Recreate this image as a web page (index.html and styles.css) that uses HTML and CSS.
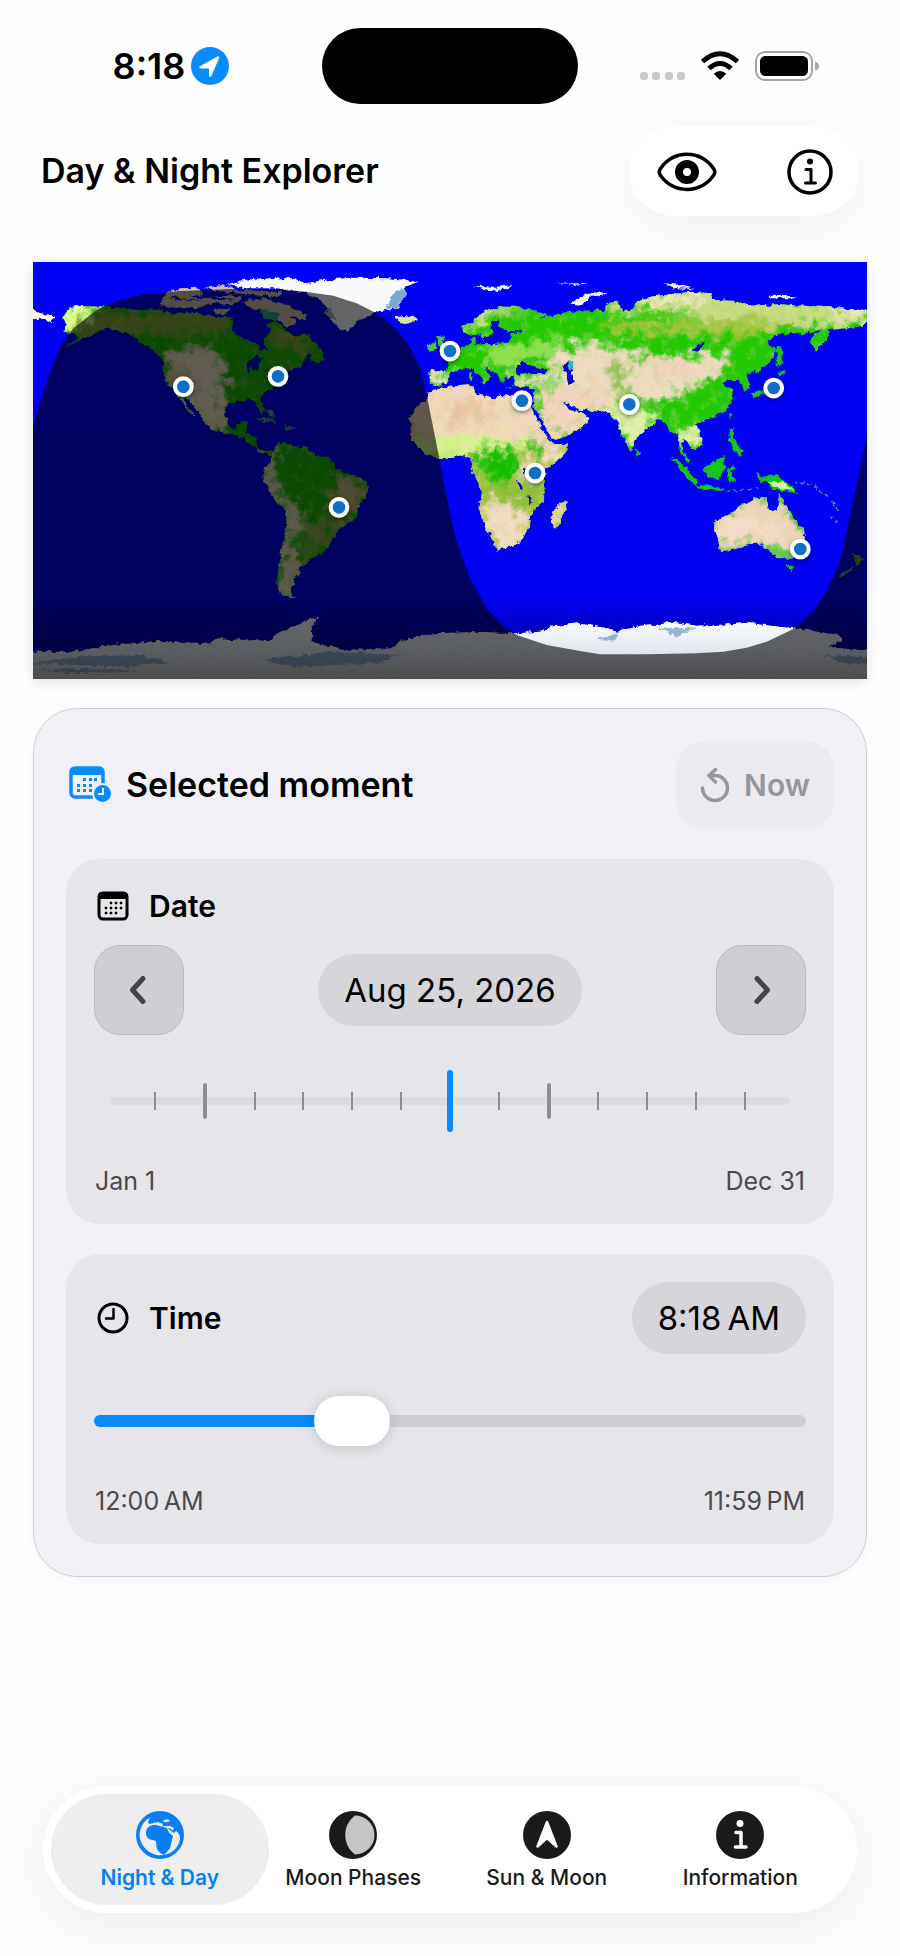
FILE: index.html
```html
<!DOCTYPE html>
<html lang="en">

<head>
  <meta charset="UTF-8">
  <meta name="viewport" content="width=device-width, initial-scale=1.0">
  <title>Day &amp; Night Explorer</title>
  <link rel="stylesheet" href="styles.css">
</head>

<body>
  <div class="status-bar">
    <div class="status-time">
      <span>8:18</span>
      <svg width="38" height="38" viewBox="0 0 38 38" aria-hidden="true">
        <circle cx="19" cy="19" r="19" fill="#0a8aff"/>
        <path d="M27 10.500 19.200 28.500V20.300H9.500Z" fill="#fff" stroke="#fff" stroke-width="2.500" stroke-linejoin="round"/>
      </svg>
    </div>
    <div class="island"></div>
    <div class="status-icons">
      <svg width="45" height="30" viewBox="0 0 45 30" aria-hidden="true" fill="#c9c9c9">
        <rect x="0" y="21" width="8" height="8" rx="3"/>
        <rect x="12" y="21" width="8" height="8" rx="3"/>
        <rect x="25" y="21" width="8" height="8" rx="3"/>
        <rect x="37" y="21" width="8" height="8" rx="3"/>
      </svg>
      <svg width="40" height="30" viewBox="0 0 40 30" aria-hidden="true" fill="none" stroke="#000" stroke-width="5">
        <path d="M2.500 10.500Q20-5 37.500 10.500"/>
        <path d="M9 17.500Q20 7.500 31 17.500"/>
        <path d="M20 29 13.700 22.700Q20 17.500 26.300 22.700Z" fill="#000" stroke="none"/>
      </svg>
      <svg width="64" height="30" viewBox="0 0 64 30" aria-hidden="true">
        <rect x="1" y="1" width="56" height="28" rx="9" fill="none" stroke="#a5a5a5" stroke-width="2"/>
        <rect x="5" y="5" width="48" height="20" rx="5.500"/>
        <path d="M60 10.500Q64 11.500 64 15T60 19.500Z" fill="#a5a5a5"/>
      </svg>
    </div>
  </div>

  <header class="header">
    <h1>Day &amp; Night Explorer</h1>
    <div class="toolbar">
      <button type="button" aria-label="View options">
        <svg width="60" height="40" viewBox="0 0 60 40" fill="none" stroke="#000" stroke-width="3.500">
          <path d="M3.500 16.500C17-2.500 43-2.500 56.500 16.500Q59 20 56.500 23.500C43 42 17 42 3.500 23.500Q1 20 3.500 16.500Z"/>
          <circle cx="30" cy="20" r="8" stroke-width="8"/>
        </svg>
      </button>
      <button type="button" aria-label="About">
        <svg width="46" height="46" viewBox="0 0 46 46" fill="none" stroke="#000" stroke-width="3">
          <circle cx="23" cy="23" r="21" stroke-width="3.500"/>
          <circle cx="23" cy="12.500" r="3" fill="#000" stroke="none"/>
          <path d="M19 20.500h5V34M18.500 34h10" stroke-linecap="round" stroke-linejoin="round"/>
        </svg>
      </button>
    </div>
  </header>

  <main class="content">
    <svg class="map" viewBox="9 21 2502 1251" role="img" aria-label="World map with day and night regions">
      <defs>
        <linearGradient id="ocean" x1="0" y1="0" x2="0" y2="1">
          <stop offset="0" stop-color="#0000f6"/>
          <stop offset="0.800" stop-color="#0000f2"/>
          <stop offset="0.920" stop-color="#0000b0"/>
          <stop offset="1" stop-color="#000080"/>
        </linearGradient>
        <linearGradient id="ice" x1="0" y1="0" x2="0" y2="1">
          <stop offset="0" stop-color="#fff"/>
          <stop offset="0.500" stop-color="#dfe6ee"/>
          <stop offset="1" stop-color="#b0b0b0"/>
        </linearGradient>
        <filter id="rough" x="-5%" y="-5%" width="110%" height="110%">
          <feTurbulence type="fractalNoise" baseFrequency="0.060" numOctaves="3" seed="4"/>
          <feDisplacementMap in="SourceGraphic" scale="18" xChannelSelector="R" yChannelSelector="G"/>
        </filter>
        <filter id="patch" x="-20%" y="-20%" width="140%" height="140%">
          <feGaussianBlur stdDeviation="11" result="b"/>
          <feTurbulence type="fractalNoise" baseFrequency="0.030" numOctaves="4" seed="9" result="n"/>
          <feDisplacementMap in="b" in2="n" scale="90" xChannelSelector="R" yChannelSelector="G"/>
        </filter>
        <filter id="grain" x="0" y="0" width="100%" height="100%">
          <feTurbulence type="fractalNoise" baseFrequency="0.035" numOctaves="5" seed="21"/>
          <feColorMatrix values="0 0 0 0 0.450  0 0 0 0 0.650  0 0 0 0 0.200  4 0 0 0 -2.100"/>
        </filter>
        <filter id="pin-shadow" x="-50%" y="-50%" width="200%" height="200%">
          <feDropShadow dx="0" dy="5" stdDeviation="7" flood-opacity="0.500"/>
        </filter>

        <path id="america" d="M100 185 120 155 150 152 205 155 260 160 330 165 385 163 430 175 480 170 520 178 560 185 600 185 612 200 602 228 640 250 680 262 692 288 706 280 700 250 722 235 712 208 740 200 770 228 800 245 825 235 865 270 885 315 860 322 835 318 850 298 830 300 815 335 770 348 745 382 722 405 700 415 690 430 705 465 698 480 684 460 678 438 650 434 620 440 590 450 583 480 592 512 615 522 630 500 655 498 645 535 680 545 680 575 700 590 726 590 718 602 690 592 665 570 640 550 610 540 580 535 545 520 520 495 480 440 460 422 475 458 497 487 482 476 455 438 430 405 410 385 400 355 400 320 370 285 340 270 310 240 270 228 230 218 190 237 150 257 100 276 145 250 130 235 98 230 112 205Z
          M725 592 745 568 765 562 790 575 830 577 860 600 895 607 920 642 960 658 1000 673 1017 695 1000 735 985 755 980 790 950 808 925 825 905 860 880 890 850 908 822 930 800 938 810 960 795 968 790 990 778 1008 798 1030 760 1025 738 995 745 940 755 880 768 820 770 770 735 735 715 700 697 675 705 640 722 620Z"/>
        <path id="arctic" d="M390 150 405 112 450 100 500 98 520 118 480 125 520 130 600 120 640 130 600 150 540 145 500 160 440 160Z
          M640 138 700 130 760 145 830 180 825 195 780 185 800 205 770 218 740 190 690 165 650 155Z
          M525 98 580 90 620 105 700 108 760 112 740 125 650 118 560 110Z M550 165 600 158 590 178 560 178Z"/>
        <path id="greenland" d="M590 90 640 78 720 70 790 70 830 85 880 75 960 68 1080 70 1165 80 1120 98 1130 122 1100 158 1050 168 1020 182 975 200 958 228 930 224 905 200 890 160 870 132 820 112 740 100 650 100Z"/>
        <path id="eurasia" d="M388 345 440 347 446 322 430 305 470 290 500 272 515 262 512 250 525 248 532 268 570 268 620 264 636 245 625 232 600 240 580 250 550 258 538 235 510 240 490 235 485 215 520 200 545 172 600 155 650 155 700 165 740 180 715 190 760 180 800 172 870 166 915 165 920 145 950 140 970 170 990 165 1010 145 1050 125 1170 110 1235 115 1240 135 1310 138 1350 152 1440 148 1560 155 1702 165 1702 200 1690 212 1640 220 1590 225 1580 255 1545 290 1532 265 1540 240 1570 220 1530 235 1440 235 1400 262 1425 280 1420 310 1380 345 1340 360 1350 400 1330 405 1320 375 1280 375 1270 390 1295 400 1300 430 1275 470 1230 490 1210 500 1185 507 1208 545 1205 570 1185 587 1160 560 1145 555 1150 590 1170 615 1165 625 1140 590 1135 540 1110 530 1095 500 1075 495 1050 515 1010 545 1000 580 990 588 965 540 955 500 915 470 840 465 810 450 788 438 805 465 840 470 865 490 858 508 800 545 755 557 740 520 700 455 700 400 640 392 640 366 618 365 612 388 598 378 590 355 552 335 575 365 556 388 540 365 520 342 480 345 450 355 445 375 420 395 390 385Z"/>
        <path id="africa" d="M385 410 400 405 450 395 520 390 525 415 590 435 600 420 690 428 694 455 730 530 755 567 805 568 800 590 735 650 732 740 695 770 690 815 660 865 590 887 575 850 550 800 535 760 545 700 515 650 515 615 490 600 420 612 380 600 335 555 330 490 350 455 385 430Z M795 735 800 760 775 820 758 820 755 790 765 760Z"/>
        <path id="australia" d="M400 800 460 770 480 750 510 745 525 728 560 730 565 760 590 768 598 715 610 740 635 780 670 820 678 850 655 900 625 912 590 905 560 880 545 865 500 868 460 885 420 888 415 860Z"/>
        <clipPath id="clip-america"><use href="#america"/></clipPath>
        <clipPath id="clip-eurasia"><use href="#eurasia"/></clipPath>
        <clipPath id="clip-africa"><use href="#africa"/></clipPath>
        <clipPath id="clip-australia"><use href="#australia"/></clipPath>
      </defs>

      <rect x="9" y="21" width="2502" height="1251" fill="url(#ocean)"/>

      <!-- Americas -->
      <g filter="url(#rough)">
        <use href="#america" fill="#1cb400"/>
        <g clip-path="url(#clip-america)">
          <g filter="url(#patch)">
            <path fill="#86a840" d="M130 170H600V230L400 240 150 250Z M720 215 870 260 800 290 730 270Z"/>
            <path fill="#dcff90" d="M90 145H210L150 205 90 240Z"/>
            <path fill="#f4e6cc" d="M400 290 480 270 560 280 590 340 580 430 590 530 540 520 460 470 410 400Z"/>
            <path fill="#dcc4a4" d="M410 340 470 320 500 400 450 430Z"/>
            <path fill="#ecdfc0" d="M690 600 740 575 735 660 760 730 830 770 790 860 820 900 800 1040 730 1030 760 850 760 770 700 720Z"/>
            <path fill="#c8b880" d="M920 660 1010 680 980 780 930 820 890 770Z"/>
            <path fill="#8cb04c" d="M820 800 920 800 880 890 830 900Z"/>
          </g>
          <rect x="80" y="140" width="950" height="900" filter="url(#grain)" opacity="0.300"/>
        </g>
        <path fill="#0000f0" d="M655 315 680 300 700 312 690 322 680 352 665 330 655 355 650 330Z M700 345 740 338 730 350Z"/>
        <use href="#arctic" fill="#d0c4a8"/>
        <path fill="#fff8dc" d="M9 163 30 175 78 186 60 202 35 188 9 190Z"/>
        <path fill="#3f9e90" d="M690 160 750 178 735 200 700 190Z M675 490 720 490 745 504 700 500Z M760 512 800 518 770 524Z M705 460 728 470 735 492 715 480Z"/>
        <path fill="#0000f0" d="M420 125 520 138 440 135Z M600 165 650 170 620 180Z M530 125 620 132 560 136Z"/>
        <use href="#greenland" fill="#f8fafc"/>
        <path fill="#4c86b8" d="M1090 115 1120 100 1130 125 1095 160 1065 160Z" opacity="0.700"/>
        <path fill="#9fb49a" d="M882 170 905 160 918 200Z"/>
      </g>

      <!-- Europe, Africa and Asia -->
      <g transform="translate(810 0)" filter="url(#rough)">
        <use href="#eurasia" fill="#22c800"/>
        <g clip-path="url(#clip-eurasia)">
          <g filter="url(#patch)">
            <path fill="#c8dc82" d="M480 150H720L600 175 540 200 490 240Z M900 130 1240 100 1710 150V215L1300 210 1180 180 1000 165 920 180Z"/>
            <path fill="#f0e8c0" d="M1000 110 1240 100 1180 150 1040 145Z M1560 155 1710 160V210Z"/>
            <path fill="#a2c63c" d="M900 200 1120 195 1380 190 1500 220 1400 240 1100 240 920 230Z"/>
            <path fill="#eedcc0" d="M760 290 860 262 960 270 1050 310 1150 300 1290 300 1270 350 1160 410 1060 440 960 430 940 480 820 480 760 380Z"/>
            <path fill="#f3d4bc" d="M820 400 910 390 930 470 840 470Z M700 400 830 400 880 500 760 560 720 520Z M1000 310 1160 310 1230 330 1140 370 1040 360Z"/>
            <path fill="#dff0a8" d="M920 440 1060 470 1060 520 1000 590 950 520Z M1130 510 1200 520 1200 580 1150 570Z"/>
            <path fill="#f0e0c0" d="M380 340 450 345 420 400 380 390Z M635 360 760 350 750 390 640 395Z"/>
            <path fill="#8ec04a" d="M920 330 1020 335 970 360 1010 450 940 400Z"/>
            <path fill="#8ee050" d="M560 260 700 280 680 340 560 330Z M640 270 780 240 760 300 700 320Z"/>
          </g>
          <rect x="380" y="100" width="1330" height="540" filter="url(#grain)" opacity="0.400"/>
        </g>
        <!-- inland water -->
        <path fill="#0000d8" d="M570 205 600 190 595 215 625 228 670 228 600 245 560 262 545 250 580 240Z M645 345 665 322 690 330 740 345 735 358 690 356 655 360Z M790 330 808 320 820 340 812 355 828 380 805 390 800 360Z M1175 285 1205 262 1215 262 1195 290Z"/>
        <path fill="#35b6c8" d="M805 318 820 322 818 345 808 340Z"/>

        <use href="#africa" fill="#b8c84e"/>
        <g clip-path="url(#clip-africa)">
          <g filter="url(#patch)">
            <path fill="#f2d8ba" d="M320 380H700L760 560 690 560 600 565 400 550 330 540Z"/>
            <path fill="#ecc4a6" d="M440 440 560 440 570 500 500 490 450 520Z"/>
            <path fill="#d3f58a" d="M330 550 500 555 680 550 690 580 600 590 400 620 330 600Z"/>
            <path fill="#18be00" d="M510 590 570 580 660 570 655 650 650 680 600 690 540 650Z M690 550 730 555 720 600 690 600Z M380 590 430 590 400 610Z"/>
            <path fill="#8fc038" d="M540 680 650 690 740 660 735 740 680 770 640 740 540 740Z"/>
            <path fill="#f2dcc4" d="M530 750 640 745 690 790 650 880 590 895Z M730 570 810 560 780 620 730 640Z M660 620 700 600 710 680 670 680Z"/>
            <path fill="#f1dcc0" d="M750 740 790 740 770 820 750 820Z"/>
          </g>
          <rect x="320" y="380" width="500" height="520" filter="url(#grain)" opacity="0.250"/>
        </g>
        <path fill="#0000c8" d="M655 672 668 700 664 708 652 685Z M685 710 693 740 688 746Z M672 640 692 642 686 658 672 655Z"/>

        <g fill="#3fce38">
          <path d="M408 242 436 245 425 262 440 288 448 300 418 302 428 285 415 270Z M380 272 405 262 405 286 386 290Z"/>
          <path fill="#e0e0ac" d="M284 186 345 182 354 195 322 206 292 198Z"/>
          <path fill="#e0f0f8" d="M525 92 590 95 635 90 620 102 570 112Z M762 86 870 84 820 90Z"/>
          <path fill="#f4f4ec" d="M812 145 840 125 880 112 930 114 870 126 850 148 830 152Z M1080 84 1130 88 1186 103 1130 100Z M1405 122 1495 124 1470 130 1410 130Z"/>
          <path d="M508 352 518 352 516 378 508 376Z M540 382 558 380 552 390Z M612 395 635 398 632 402Z"/>
        </g>
      </g>

      <!-- Pacific islands and Australia -->
      <g transform="translate(1650 0)" filter="url(#rough)">
        <g fill="#14c41c">
          <path d="M370 640 430 600 436 640 415 672 380 665Z M275 610 300 620 330 650 355 680 345 690 318 665Z M345 690 380 692 430 702 430 709 380 704 350 700Z M440 640 472 636 450 650 465 680 450 685Z"/>
          <path d="M448 518 460 520 458 545 470 560 488 590 480 606 465 592 450 560Z M446 475 457 475 452 492Z M590 352 622 345 600 366Z M590 372 600 390 585 405 550 418 520 430 512 415 560 398Z M590 272 606 275 608 310 598 338 590 330Z"/>
          <path d="M525 652 550 665 585 658 630 690 655 718 620 708 580 708 570 685 540 680Z M165 578 180 595 170 606Z M620 930 642 932 635 948 625 946Z"/>
          <path fill="#5aa038" d="M818 890 852 912 832 936 825 915Z M825 932 800 960 772 970 790 950Z"/>
        </g>
        <path fill="#d8f0a0" d="M565 680 610 682 640 704 590 698Z"/>
        <path fill="none" stroke="#3aa8a0" stroke-width="4" stroke-dasharray="12 9" d="M440 708 540 698M640 682 700 690 740 722M755 740 780 770M750 785 770 800"/>
        <use href="#australia" fill="#60c84c"/>
        <g clip-path="url(#clip-australia)">
          <g filter="url(#patch)">
            <path fill="#ecd4b6" d="M395 780 520 725 600 740 675 830 655 890 560 880 500 865 405 880Z"/>
            <path fill="#f4dcc8" d="M410 800 520 780 560 820 480 855 420 850Z M550 800 610 810 600 850 560 850Z"/>
          </g>
        </g>
      </g>

      <!-- Antarctica -->
      <g filter="url(#rough)">
        <path fill="url(#ice)" d="M-20 1190 120 1190 250 1170 380 1158 540 1165 560 1150 720 1158 740 1135 790 1112 840 1095 875 1087 842 1110 845 1160 940 1185 1080 1180 1120 1155 1210 1135 1350 1130 1450 1135 1530 1130 1560 1115 1640 1105 1710 1115 1760 1130 1840 1110 1930 1100 2000 1112 2100 1108 2150 1103 2290 1120 2430 1140 2440 1158 2390 1175 2540 1190V1300H-20Z"/>
        <g fill="#3f78b0" opacity="0.500">
          <path d="M0 1225 140 1205 330 1200 420 1222 300 1235 150 1230Z M20 1245 250 1240 330 1250 120 1255Z M700 1215 900 1190 1110 1200 1040 1225 800 1235Z M2380 1200 2520 1205V1230L2440 1225Z M1700 1150 1770 1130 1750 1160Z M1880 1120 2000 1118 1940 1145Z"/>
        </g>
      </g>

      <path fill="#000" fill-opacity="0.600" d="M9 515 30 440 60 350 90 275 130 220 200 165 260 138 340 118 450 108 600 102H720L810 108 910 122 980 145 1050 180 1100 225 1140 275 1170 340 1192 430 1210 520 1230 620 1255 750 1280 860 1320 970 1370 1060 1420 1115 1460 1140 1550 1170 1650 1188 1710 1198H1850L2000 1195 2080 1190 2150 1178 2210 1160 2290 1122 2350 1070 2395 1000 2435 900 2465 760 2490 640 2511 540V1272H9Z"/>

      <g fill="#0f70c6" stroke="#fff" stroke-width="12" filter="url(#pin-shadow)">
        <circle cx="460" cy="395" r="25"/>
        <circle cx="744" cy="364" r="25"/>
        <circle cx="927" cy="757" r="25"/>
        <circle cx="1260" cy="288" r="25"/>
        <circle cx="1476" cy="437" r="25"/>
        <circle cx="1515" cy="654" r="25"/>
        <circle cx="1798" cy="448" r="25"/>
        <circle cx="2231" cy="399" r="25"/>
        <circle cx="2311" cy="882" r="25"/>
      </g>
    </svg>

    <section class="card">
      <div class="card-header">
        <svg width="44" height="38" viewBox="0 0 44 38" aria-hidden="true">
          <rect x="2" y="2" width="32" height="29" rx="4" fill="none" stroke="#0a8aff" stroke-width="3.500"/>
          <path d="M1 9V5Q1 1 5 1H31Q35 1 35 5V9Z" fill="#0a8aff"/>
          <g fill="#0a8aff">
            <path d="M14 12h3v3h-3zM20 12h3v3h-3zM25 12h3v3h-3zM8 18h3v3H8zM14 18h3v3h-3zM20 18h3v3h-3zM8 23h3v3H8zM14 23h3v3h-3zM20 23h3v3h-3z"/>
          </g>
          <circle cx="33.500" cy="27.500" r="9.500" fill="#0a8aff" stroke="#f1f0f6" stroke-width="2"/>
          <path d="M34 22V28H29" fill="none" stroke="#f1f0f6" stroke-width="2"/>
        </svg>
        <h2>Selected moment</h2>
        <button type="button" class="now-button" disabled>
          <svg width="30" height="36" viewBox="0 0 30 36" aria-hidden="true" fill="none" stroke="#96969b" stroke-width="3.500" stroke-linecap="round" stroke-linejoin="round">
            <path d="M2.500 21A12.500 12.500 0 1 0 15 8.500H9"/>
            <path d="M15.500 2.500 9 8.500 15.500 15"/>
          </svg>
          Now
        </button>
      </div>

      <div class="panel">
        <label class="panel-title" for="date-range">
          <svg width="32" height="30" viewBox="0 0 32 30" aria-hidden="true">
            <rect x="2" y="2" width="28" height="26" rx="4" fill="none" stroke="#000" stroke-width="3"/>
            <path d="M1 8V5Q1 1 5 1H27Q31 1 31 5V8Z"/>
            <path d="M13 11h2v2h-2zM18 11h2v2h-2zM23 11h2v2h-2zM8 16h2v2H8zM13 16h2v2h-2zM18 16h2v2h-2zM23 16h2v2h-2zM8 21h2v2H8zM13 21h2v2h-2zM18 21h2v2h-2z" stroke="#000" stroke-width="0.500"/>
          </svg>
          Date
        </label>
        <div class="date-row">
          <button type="button" class="step-button" aria-label="Previous day">
            <svg width="18" height="30" viewBox="0 0 18 30"><path d="M13 3.500 2.500 15 13 26.500"/></svg>
          </button>
          <button type="button" class="value-pill">Aug 25, 2026</button>
          <button type="button" class="step-button" aria-label="Next day">
            <svg width="18" height="30" viewBox="0 0 18 30"><path d="M5 3.500 15.500 15 5 26.500"/></svg>
          </button>
        </div>
        <div class="ruler">
          <div class="ticks">
            <i></i><i class="major"></i><i></i><i></i><i></i><i></i><i></i><i></i><i class="major"></i><i></i><i></i><i></i><i></i>
          </div>
          <input type="range" id="date-range" min="0" max="12" value="6">
        </div>
        <div class="range-labels">
          <span>Jan 1</span>
          <span>Dec 31</span>
        </div>
      </div>

      <div class="panel">
        <div class="time-row">
          <label class="panel-title" for="time-range">
            <svg width="32" height="32" viewBox="0 0 32 32" aria-hidden="true" fill="none" stroke="#000" stroke-width="3">
              <circle cx="16" cy="16" r="14"/>
              <path d="M16.500 7V16.500H9" stroke-width="2.500" stroke-linecap="round" stroke-linejoin="round"/>
            </svg>
            Time
          </label>
          <button type="button" class="value-pill">8:18&#8239;AM</button>
        </div>
        <input type="range" id="time-range" class="time-slider" min="0" max="1439" value="498">
        <div class="range-labels">
          <span>12:00&#8239;AM</span>
          <span>11:59&#8239;PM</span>
        </div>
      </div>
    </section>
  </main>

  <nav class="tab-bar">
    <a href="#night-day" class="tab active">
      <svg width="48" height="48" viewBox="0 0 48 48" aria-hidden="true">
        <circle cx="24" cy="24" r="24" fill="#0a7ff5"/>
        <path fill="#eee" d="M14 6.500C4 12 1 24 6 33S21 45.500 28 44C26 43 23 41.500 21 38 20 35 21 32 20 29 17 27 13 29 11 26 9 23 10 17 14 15 18 13 22 14 25 15.500 29 15.500 31 17 32 20 33 23 36 24 37 25 35 29 36 32 34 37 32 40 29 43 28 44 36 43 43 36 44 28 44 24 43 22 40 20L38 22 35 20 32 17.500 33 17 37 19.500 38 17 34 15 27 15 26 12 23 13 22 15 19 12 13 13 12 11Z"/>
        <path fill="#0a7ff5" d="M10.500 20Q12 14.500 18 14.500L25 15.500 31 17.500 33 22 37 25 35.500 30 34 34Q31 41 27 41.500 22.500 42 21 37L20 30Q17 28.500 14 28.500 10 26 10.500 20Z"/>
        <path fill="#eee" d="M27 9.500 31 8 34 9.500 32 11 28 11Z M17 12 22 11 26 13 24 14.500 18 13.500Z"/>
      </svg>
      <span>Night &amp; Day</span>
    </a>
    <a href="#moon-phases" class="tab">
      <svg width="48" height="48" viewBox="0 0 48 48" aria-hidden="true">
        <circle cx="24" cy="24" r="24" fill="#1a1a1a"/>
        <path d="M26 4.500A19.500 19.500 0 0 1 26 43.500C13 34 13 14 26 4.500Z" fill="#c5c5c5"/>
      </svg>
      <span>Moon Phases</span>
    </a>
    <a href="#sun-moon" class="tab">
      <svg width="48" height="48" viewBox="0 0 48 48" aria-hidden="true">
        <circle cx="24" cy="24" r="24" fill="#1a1a1a"/>
        <path d="M24 11 33.500 35.500 24 27 14.500 35.500Z" fill="#fff" stroke="#fff" stroke-width="2.500" stroke-linejoin="round"/>
      </svg>
      <span>Sun &amp; Moon</span>
    </a>
    <a href="#information" class="tab">
      <svg width="48" height="48" viewBox="0 0 48 48" aria-hidden="true">
        <circle cx="24" cy="24" r="24" fill="#1a1a1a"/>
        <circle cx="24" cy="12.500" r="3.500" fill="#fff"/>
        <path d="M20 21.500H25V36M19.500 36H30" fill="none" stroke="#fff" stroke-width="3.500" stroke-linecap="round" stroke-linejoin="round"/>
      </svg>
      <span>Information</span>
    </a>
  </nav>
</body>

</html>
```

FILE: styles.css
```css
* {
  box-sizing: border-box;
}

body {
  margin: 0;
  min-height: 100vh;
  display: flex;
  flex-direction: column;
  font-family: Inter, "Liberation Sans", sans-serif;
  background: #fefefe;
  color: #000;
  overflow-x: hidden;
}

svg {
  display: block;
  flex: none;
}

h1,
h2 {
  margin: 0;
  font-size: 34px;
  line-height: 40px;
  font-weight: 600;
}

button {
  margin: 0;
  padding: 0;
  border: none;
  background: none;
  color: inherit;
  font-family: inherit;
  cursor: pointer;
}

/* Status bar */
.status-bar {
  display: grid;
  grid-template-columns: 1fr 256px 1fr;
  align-items: center;
  padding: 28px 20px 0;
}

.status-time {
  display: flex;
  align-items: center;
  justify-content: center;
  gap: 6px;
  font-size: 36px;
  line-height: 40px;
  font-weight: 600;
}

.island {
  height: 76px;
  border-radius: 38px;
  background: #000;
}

.status-icons {
  display: flex;
  justify-content: center;
  gap: 15px;
}

/* Title row */
.header {
  display: flex;
  align-items: center;
  justify-content: space-between;
  padding: 22px 41px 0;
}

.toolbar {
  display: flex;
  align-items: center;
  justify-content: space-between;
  width: 230px;
  height: 90px;
  padding: 2px 26px 0 28px;
  border-radius: 45px;
  background: #fff;
  box-shadow: 0 12px 50px rgba(0, 0, 0, 0.06);
}

.content {
  padding: 46px 33px 40px;
}

.map {
  width: 100%;
  height: auto;
  box-shadow: 0 2px 12px rgba(0, 0, 0, 0.12);
}

/* Selected moment */
.card {
  display: flex;
  flex-direction: column;
  gap: 30px;
  margin-top: 29px;
  padding: 32px;
  border: 1px solid #cfcfd3;
  border-radius: 44px;
  background: #f1f0f6;
  box-shadow: 0 4px 16px rgba(0, 0, 0, 0.04);
}

.card-header {
  display: flex;
  align-items: center;
  gap: 13px;
  padding-left: 3px;
}

.now-button {
  display: flex;
  align-items: center;
  justify-content: center;
  gap: 14px;
  width: 158px;
  height: 88px;
  margin-left: auto;
  border-radius: 28px;
  background: #ebeaef;
  color: #96969b;
  font-size: 30px;
  font-weight: 600;
}

.panel {
  padding: 28px;
  border-radius: 34px;
  background: #e6e5ea;
}

.panel-title {
  display: flex;
  align-items: center;
  gap: 20px;
  padding-left: 3px;
  font-size: 30px;
  line-height: 38px;
  font-weight: 600;
}

.date-row,
.time-row {
  display: flex;
  align-items: center;
  justify-content: space-between;
}

.date-row {
  margin-top: 20px;
}

.step-button {
  display: grid;
  place-items: center;
  width: 90px;
  height: 90px;
  border: 1px solid #bbbabf;
  border-radius: 26px;
  background: #cfced3;
}

.step-button path {
  fill: none;
  stroke: #444348;
  stroke-width: 5px;
  stroke-linecap: round;
  stroke-linejoin: round;
}

.value-pill {
  padding: 14px 26px;
  border-radius: 38px;
  background: #d6d5da;
  font-size: 33px;
  line-height: 44px;
}

/* Date ruler */
.ruler {
  display: grid;
  align-items: center;
  margin-top: 35px;
  padding: 0 16px;
}

.ticks,
.ruler input {
  grid-area: 1 / 1;
}

.ticks {
  display: flex;
  align-items: center;
  justify-content: space-between;
  padding: 0 44px;
  z-index: 1;
  pointer-events: none;
}

.ticks i {
  width: 2px;
  height: 18px;
  background: #8e8d92;
}

.ticks .major {
  width: 4px;
  height: 36px;
  border-radius: 2px;
}

.ruler input {
  z-index: 0;
}

.ticks i:nth-child(7) {
  visibility: hidden;
}

input[type="range"] {
  appearance: none;
  width: 100%;
  margin: 0;
  background: none;
}

.ruler input {
  height: 62px;
}

.ruler input::-webkit-slider-runnable-track {
  height: 8px;
  border-radius: 4px;
  background: #dcdbe0;
}

.ruler input::-webkit-slider-thumb {
  appearance: none;
  width: 6px;
  height: 62px;
  margin-top: -27px;
  border-radius: 3px;
  background: #0a8aff;
}

.range-labels {
  display: flex;
  justify-content: space-between;
  padding: 0 1px;
  font-size: 25px;
  line-height: 30px;
  color: #4a494e;
}

.ruler + .range-labels {
  margin-top: 34px;
}

/* Time slider */
.time-slider {
  display: block;
  height: 50px;
}

.time-row + .time-slider {
  margin-top: 42px;
}

.time-slider + .range-labels {
  margin-top: 40px;
}

.time-slider::-webkit-slider-runnable-track {
  height: 12px;
  border-radius: 6px;
  background: linear-gradient(to right, #0a8aff 36%, #cfced3 36%);
}

.time-slider::-webkit-slider-thumb {
  appearance: none;
  width: 76px;
  height: 50px;
  margin-top: -19px;
  border-radius: 25px;
  background: #fff;
  box-shadow: 0 2px 14px rgba(0, 0, 0, 0.15);
}

/* Tab bar */
.tab-bar {
  display: grid;
  grid-template-columns: repeat(4, 1fr);
  margin: auto 43px 43px;
  padding: 8px 20px;
  border-radius: 64px;
  background: #fff;
  box-shadow: 0 12px 60px rgba(0, 0, 0, 0.08);
}

.tab {
  position: relative;
  display: flex;
  flex-direction: column;
  align-items: center;
  gap: 6px;
  padding: 17px 0 14px;
  color: #1a1a1a;
  font-size: 21px;
  line-height: 26px;
  font-weight: 500;
  text-decoration: none;
}

.tab svg,
.tab span {
  position: relative;
}

.tab.active {
  color: #0a7ff5;
  font-weight: 600;
}

.tab.active::before {
  content: "";
  position: absolute;
  inset: 0 -12px;
  border-radius: 56px;
  background: #eee;
}
```
